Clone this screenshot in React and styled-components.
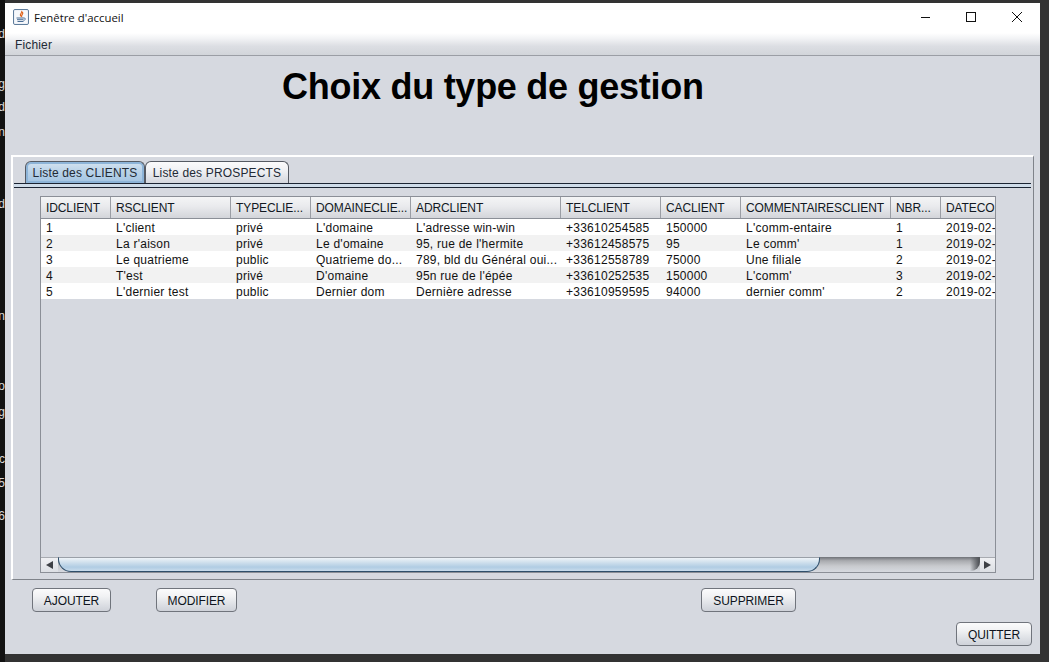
import React from "react";
import styled, { createGlobalStyle } from "styled-components";

const Global = createGlobalStyle`
  html, body { margin: 0; padding: 0; background: #333333; }
  body { width: 1049px; height: 662px; overflow: hidden; font-family: "Liberation Sans", Arial, sans-serif; }
`;

const Desktop = styled.div`
  display: flex;
  width: 1049px;
  height: 662px;
  background: #333333;
  overflow: hidden;
`;

const BehindStrip = styled.div`
  position: relative;
  flex: 0 0 5px;
  height: 100%;
  background: #121212;
  overflow: hidden;
`;

const Fragment = styled.span`
  position: absolute;
  right: 0;
  font-size: 12px;
  line-height: 14px;
  color: #d8d8d8;
  white-space: nowrap;
`;

const Window = styled.div`
  display: flex;
  flex-direction: column;
  width: 1035px;
  height: 651px;
  margin-top: 3px;
  background: #d6d9e0;
`;

const TitleBar = styled.div`
  display: flex;
  align-items: center;
  flex: 0 0 30px;
  box-sizing: border-box;
  height: 30px;
  padding: 0 0 2px 8px;
  background: #ffffff;
`;

const TitleText = styled.span`
  margin-left: 5px;
  font-family: "Open Sans", "Noto Sans", sans-serif;
  font-size: 11.4px;
  color: #111111;
`;

const WindowButtons = styled.div`
  display: flex;
  margin-left: auto;
`;

const WindowButton = styled.div`
  display: flex;
  align-items: center;
  justify-content: center;
  width: 46px;
  height: 28px;
`;

const MenuBar = styled.div`
  display: flex;
  align-items: center;
  flex: 0 0 23px;
  height: 23px;
  padding: 2px 0 0 10px;
  box-sizing: border-box;
  background: linear-gradient(#ffffff 0%, #f2f3f5 25%, #dcdee3 60%, #d2d5da 100%);
  border-bottom: 1px solid #9b9ea5;
  font-size: 12px;
  letter-spacing: 0.15px;
  color: #222a35;
`;

const Content = styled.div`
  display: flex;
  flex-direction: column;
  flex: 1;
  padding: 0 7px 0 6px;
`;

const Heading = styled.h1`
  margin: 0;
  height: 99px;
  padding: 9px 0 0 271px;
  box-sizing: border-box;
  font-size: 36px;
  letter-spacing: -0.26px;
  line-height: 44px;
  font-weight: 700;
  color: #000000;
`;

const TabPanel = styled.div`
  height: 425px;
  width: 1023px;
  box-sizing: border-box;
  padding: 4px 2px 0 1px;
  border-top: 2px solid #ffffff;
  border-left: 2px solid #ffffff;
  border-right: 1px solid #7f838a;
  border-bottom: 1px solid #7f838a;
  background: #d6d9e0;
`;

const TabStrip = styled.div`
  display: flex;
  height: 22px;
  padding-left: 11px;
`;

const Tab = styled.div`
  display: flex;
  align-items: center;
  justify-content: center;
  box-sizing: border-box;
  width: ${(p) => p.$w}px;
  height: 22px;
  font-size: 12px;
  letter-spacing: 0.16px;
  color: #222a35;
  border: 1px solid #555a63;
  border-bottom: none;
  border-radius: 6px 6px 0 0;
  background: ${(p) =>
    p.$active
      ? "linear-gradient(#d5e3f0 0%, #b9d2e8 45%, #a3c4e2 100%)"
      : "linear-gradient(#fbfbfc 0%, #f0f1f4 40%, #d4d7de 100%)"};
  box-shadow: ${(p) => (p.$active ? "inset 0 0 0 2px #8db4d8" : "none")};
`;

const TabRule = styled.div`
  height: 3px;
  border-top: 1px solid #1b2433;
  border-bottom: 1px solid #1b2433;
  background: #cfdce9;
`;

const TableFrame = styled.div`
  display: flex;
  flex-direction: column;
  box-sizing: border-box;
  width: 956px;
  height: 377px;
  margin: 8px 0 0 26px;
  border: 1px solid #8b8f97;
  overflow: hidden;
`;

const columns = "70px 120px 80px 100px 150px 100px 80px 150px 50px 60px";

const HeaderRow = styled.div`
  display: grid;
  grid-template-columns: ${columns};
  flex: 0 0 22px;
  box-sizing: border-box;
  height: 22px;
  border-bottom: 1px solid #8b8f97;
  background: linear-gradient(#f4f5f6 0%, #e9eaed 45%, #d3d5da 100%);
`;

const HeaderCell = styled.div`
  box-sizing: border-box;
  padding-left: 5px;
  font-size: 12px;
  letter-spacing: -0.1px;
  line-height: 23px;
  color: #111822;
  border-right: 1px solid #9a9da4;
  white-space: nowrap;
  overflow: hidden;
`;

const Body = styled.div`
  flex: 1;
  background: #d6d9e0;
`;

const Row = styled.div`
  display: grid;
  grid-template-columns: ${columns};
  height: 16px;
  background: ${(p) => (p.$alt ? "#f2f2f2" : "#ffffff")};
`;

const Cell = styled.div`
  padding-left: 5px;
  font-size: 12px;
  letter-spacing: 0.25px;
  line-height: 18px;
  color: #111111;
  white-space: nowrap;
  overflow: hidden;
`;

const ScrollBar = styled.div`
  display: flex;
  flex: 0 0 15px;
  height: 15px;
  background: linear-gradient(#6f7278 0%, #a9abaf 25%, #c8cace 60%, #d6d9e0 100%);
`;

const ArrowButton = styled.div`
  display: flex;
  align-items: center;
  justify-content: center;
  flex: 0 0 ${(p) => p.$w}px;
  background: linear-gradient(#eff0f3, #dcdfe4);
  border-top: 1px solid #a8abb1;
  box-sizing: border-box;
`;

const Thumb = styled.div`
  flex: 0 0 762px;
  box-sizing: border-box;
  border: 1px solid #2f4f6b;
  border-top: 1px solid #9aa0a8;
  border-radius: 0 0 13px 13px;
  background: linear-gradient(#eef3f8 0%, #d3e2ee 30%, #b0cce3 70%, #c9dcec 100%);
`;

const Track = styled.div`
  position: relative;
  flex: 1;
`;

const TrackEnd = styled.div`
  position: absolute;
  top: 0;
  right: 0;
  width: 10px;
  height: 14px;
  border-radius: 0 0 9px 0;
  background: linear-gradient(90deg, rgba(90, 93, 98, 0), #55585d 85%);
`;

const ActionRow = styled.div`
  display: flex;
  height: 24px;
  margin-top: 8px;
  padding-left: 21px;
`;

const Button = styled.div`
  display: flex;
  align-items: center;
  justify-content: center;
  box-sizing: border-box;
  width: ${(p) => p.$w}px;
  height: 24px;
  padding-top: 2px;
  margin-left: ${(p) => p.$gap || 0}px;
  border: 1px solid #70747c;
  border-radius: 4px;
  font-size: 12px;
  letter-spacing: -0.1px;
  color: #0e1420;
  background: linear-gradient(#fbfbfc 0%, #f0f1f3 35%, #d8dbe1 80%, #cfd2d9 100%);
`;

const QuitRow = styled.div`
  display: flex;
  justify-content: flex-end;
  margin-top: 10px;
  padding-right: 1px;
`;

const JavaIcon = () => (
  <svg width="16" height="16" viewBox="0 0 16 16">
    <rect x="0.5" y="0.5" width="15" height="15" rx="1.5" fill="#e6ebf2" stroke="#5f7d9c" />
    <rect x="1.5" y="1.5" width="13" height="13" fill="#f6f8fb" />
    <path d="M8.5 2c1.5 1.5-2 2.5-1 4.5.4.8 1 1 1 1-.6-1.4 2.3-2.2 1-4.5" fill="none" stroke="#e0651e" strokeWidth="1.2" />
    <path d="M3.5 9h7.5M4 10.7h6.5M4.5 12.5h6" fill="none" stroke="#4a6d94" strokeWidth="1" />
    <path d="M11 9c2 0 2 2-.5 2.4" fill="none" stroke="#4a6d94" strokeWidth="0.9" />
  </svg>
);

const Triangle = ({ dir }) => (
  <svg width="7" height="8" viewBox="0 0 7 8">
    <path d={dir === "left" ? "M7 0v8L0 4z" : "M0 0v8l7-4z"} fill="#3e4146" />
  </svg>
);

const headers = ["IDCLIENT", "RSCLIENT", "TYPECLIE...", "DOMAINECLIE...", "ADRCLIENT", "TELCLIENT", "CACLIENT", "COMMENTAIRESCLIENT", "NBR...", "DATECO"];

const rows = [
  ["1", "L'client", "privé", "L'domaine", "L'adresse win-win", "+33610254585", "150000", "L'comm-entaire", "1", "2019-02-"],
  ["2", "La r'aison", "privé", "Le d'omaine", "95, rue de l'hermite", "+33612458575", "95", "Le comm'", "1", "2019-02-"],
  ["3", "Le quatrieme", "public", "Quatrieme do...", "789, bld du Général oui...", "+33612558789", "75000", "Une filiale", "2", "2019-02-"],
  ["4", "T'est", "privé", "D'omaine", "95n rue de l'épée", "+33610252535", "150000", "L'comm'", "3", "2019-02-"],
  ["5", "L'dernier test", "public", "Dernier dom", "Dernière adresse", "+33610959595", "94000", "dernier comm'", "2", "2019-02-"],
];

const fragments = [
  ["d", 27], ["g", 77], ["d", 100], ["n", 125], ["d", 197], ["n", 309], ["o", 379], ["g", 405], ["c", 452], ["5", 476], ["6", 509],
];

export default function App() {
  return (
    <Desktop>
      <Global />
      <BehindStrip>
        {fragments.map(([c, top], i) => (
          <Fragment key={i} style={{ top }}>{c}</Fragment>
        ))}
      </BehindStrip>
      <Window>
        <TitleBar>
          <JavaIcon />
          <TitleText>Fenêtre d'accueil</TitleText>
          <WindowButtons>
            <WindowButton>
              <svg width="10" height="10" viewBox="-1 0 10 10"><path d="M0 5.5h10" stroke="#111" strokeWidth="1" /></svg>
            </WindowButton>
            <WindowButton>
              <svg width="10" height="10" viewBox="0 0 10 10"><rect x="0.5" y="0.5" width="9" height="9" fill="none" stroke="#111" /></svg>
            </WindowButton>
            <WindowButton>
              <svg width="10" height="10" viewBox="0 0 10 10"><path d="M0 0l10 10M10 0L0 10" stroke="#111" strokeWidth="1" /></svg>
            </WindowButton>
          </WindowButtons>
        </TitleBar>
        <MenuBar>Fichier</MenuBar>
        <Content>
          <Heading>Choix du type de gestion</Heading>
          <TabPanel>
            <TabStrip>
              <Tab $active $w={120}>Liste des CLIENTS</Tab>
              <Tab $w={144}>Liste des PROSPECTS</Tab>
            </TabStrip>
            <TabRule />
            <TableFrame>
              <HeaderRow>
                {headers.map((h) => <HeaderCell key={h}>{h}</HeaderCell>)}
              </HeaderRow>
              <Body>
                {rows.map((r, i) => (
                  <Row key={r[0]} $alt={i % 2 === 1}>
                    {r.map((c, j) => <Cell key={j}>{c}</Cell>)}
                  </Row>
                ))}
              </Body>
              <ScrollBar>
                <ArrowButton $w={17}><Triangle dir="left" /></ArrowButton>
                <Thumb />
                <Track><TrackEnd /></Track>
                <ArrowButton $w={15}><Triangle dir="right" /></ArrowButton>
              </ScrollBar>
            </TableFrame>
          </TabPanel>
          <ActionRow>
            <Button $w={79}>AJOUTER</Button>
            <Button $w={81} $gap={45}>MODIFIER</Button>
            <Button $w={95} $gap={464}>SUPPRIMER</Button>
          </ActionRow>
          <QuitRow>
            <Button $w={76}>QUITTER</Button>
          </QuitRow>
        </Content>
      </Window>
    </Desktop>
  );
}
